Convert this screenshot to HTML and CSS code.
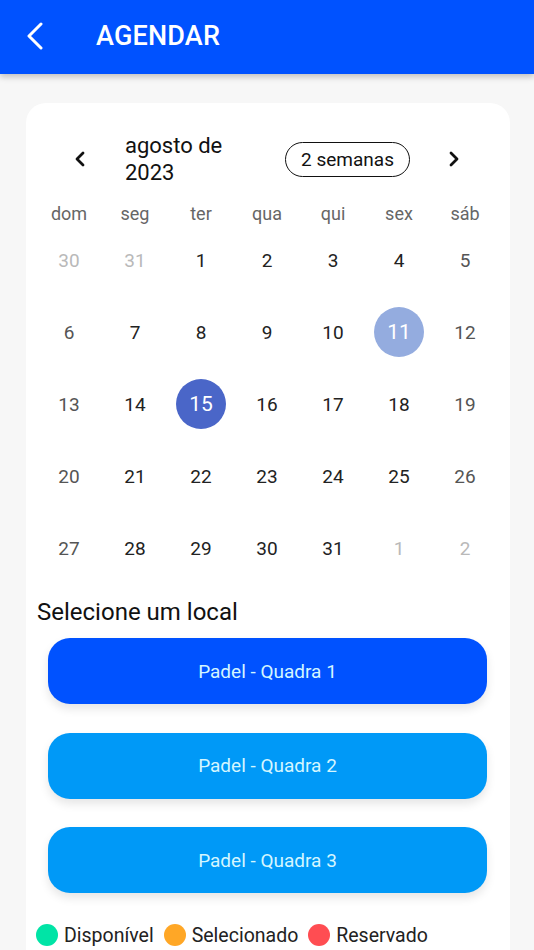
FILE: index.html
```html
<!DOCTYPE html>
<html lang="pt">
<head>
<meta charset="utf-8">
<title>Agendar</title>
<link rel="stylesheet" href="styles.css">
</head>
<body>
<header class="appbar">
  <svg class="back" width="18" height="28" viewBox="0 0 18 28"><path d="M15 2 L3 14 L15 26" fill="none" stroke="#fff" stroke-width="3" stroke-linecap="round" stroke-linejoin="round"/></svg>
  <h1 class="title">AGENDAR</h1>
</header>
<main class="card">
  <div class="cal-head">
    <span class="chev"><svg width="14" height="18" viewBox="0 0 14 18"><path d="M10 3 L4 9 L10 15" fill="none" stroke="#111" stroke-width="2.8" stroke-linecap="round" stroke-linejoin="round"/></svg></span>
    <div class="month">agosto de<br>2023</div>
    <span class="pill">2 semanas</span>
    <span class="chev next"><svg width="14" height="18" viewBox="0 0 14 18"><path d="M4 3 L10 9 L4 15" fill="none" stroke="#111" stroke-width="2.8" stroke-linecap="round" stroke-linejoin="round"/></svg></span>
  </div>
  <div class="grid weekdays">
    <span>dom</span><span>seg</span><span>ter</span><span>qua</span><span>qui</span><span>sex</span><span>sáb</span>
  </div>
  <div class="grid days">
    <span class="out">30</span><span class="out">31</span><span>1</span><span>2</span><span>3</span><span>4</span><span class="we">5</span>
    <span class="we">6</span><span>7</span><span>8</span><span>9</span><span>10</span><span><b class="dot light">11</b></span><span class="we">12</span>
    <span class="we">13</span><span>14</span><span><b class="dot dark">15</b></span><span>16</span><span>17</span><span>18</span><span class="we">19</span>
    <span class="we">20</span><span>21</span><span>22</span><span>23</span><span>24</span><span>25</span><span class="we">26</span>
    <span class="we">27</span><span>28</span><span>29</span><span>30</span><span>31</span><span class="out">1</span><span class="out">2</span>
  </div>
  <h2 class="section">Selecione um local</h2>
  <div class="courts">
    <button class="court active">Padel - Quadra 1</button>
    <button class="court">Padel - Quadra 2</button>
    <button class="court">Padel - Quadra 3</button>
  </div>
  <div class="legend">
    <span class="item"><i class="ball green"></i>Disponível</span>
    <span class="item"><i class="ball orange"></i>Selecionado</span>
    <span class="item"><i class="ball red"></i>Reservado</span>
  </div>
</main>
</body>
</html>
```
FILE: styles.css
```css
* { box-sizing: border-box; }
html, body { margin: 0; padding: 0; }
body {
  background: #f7f7f7;
  font-family: Roboto, "Noto Sans", sans-serif;
  color: #222;
  width: 534px;
  height: 950px;
  overflow: hidden;
}
.appbar {
  height: 74px;
  background: #0052ff;
  display: flex;
  align-items: center;
  padding-left: 26px;
  box-shadow: 0 3px 6px rgba(0,0,0,0.22);
  position: relative;
  z-index: 2;
}
.back { display: block; margin-top: -2px; }
.title {
  margin: -2px 0 0 52px;
  color: #fff;
  font-size: 27px;
  font-weight: 500;
  letter-spacing: 0.2px;
  line-height: 1;
}
.card {
  margin: 29px 24px 0 26px;
  background: #fff;
  border-radius: 20px 20px 0 0;
  padding: 29px 0 0 10px;
  height: 847px;
  overflow: hidden;
}
.cal-head {
  display: flex;
  align-items: center;
  height: 54px;
}
.chev {
  width: 24px;
  display: flex;
  justify-content: center;
  margin-left: 32px;
}
.month {
  width: 150px;
  margin-left: 33px;
  font-size: 22px;
  line-height: 27px;
  color: #111;
}
.pill {
  margin-left: 10px;
  width: 125px;
  height: 35px;
  border: 1.5px solid #111;
  border-radius: 18px;
  display: flex;
  align-items: center;
  justify-content: center;
  font-size: 19px;
  color: #111;
}
.grid {
  display: grid;
  grid-template-columns: repeat(7, 66px);
}
.weekdays {
  margin-top: 16px;
  height: 23px;
  align-items: center;
  color: #666;
  font-size: 18px;
}
.weekdays span, .days span {
  text-align: center;
}
.days {
  margin-top: -1px;
}
.days span {
  height: 72px;
  display: flex;
  align-items: center;
  justify-content: center;
  font-size: 19px;
  color: #222;
}
.days span.we { color: #555; }
.days span.out { color: #b9b9b9; }
.dot {
  width: 50px;
  height: 50px;
  border-radius: 50%;
  display: flex;
  align-items: center;
  justify-content: center;
  color: #fff;
  font-weight: 400;
  font-size: 21px;
}
.dot.light { background: #94acdf; }
.dot.dark { background: #4a66c8; }
.section {
  margin: 13px 0 0 1px;
  font-size: 24px;
  font-weight: 400;
  line-height: 30px;
  color: #111;
}
.courts {
  margin: 11px 0 0 12px;
  display: flex;
  flex-direction: column;
  gap: 28.5px;
  width: 439px;
}
.court {
  height: 66px;
  border: none;
  border-radius: 22px;
  background: #0099f7;
  color: #d4f6ff;
  font-family: Roboto, "Noto Sans", sans-serif;
  font-size: 19px;
  box-shadow: 0 5px 10px rgba(0,0,0,0.10);
  padding: 0;
}
.court.active { background: #0052ff; }
.legend {
  margin-top: 30px;
  display: flex;
  align-items: center;
  gap: 10px;
  height: 24px;
}
.item {
  display: flex;
  align-items: center;
  gap: 6px;
  font-size: 19.5px;
  color: #222;
}
.ball {
  width: 22px;
  height: 22px;
  border-radius: 50%;
  display: block;
}
.ball.green { background: #00e4a6; }
.ball.orange { background: #ffa726; }
.ball.red { background: #ff4d52; }
```
